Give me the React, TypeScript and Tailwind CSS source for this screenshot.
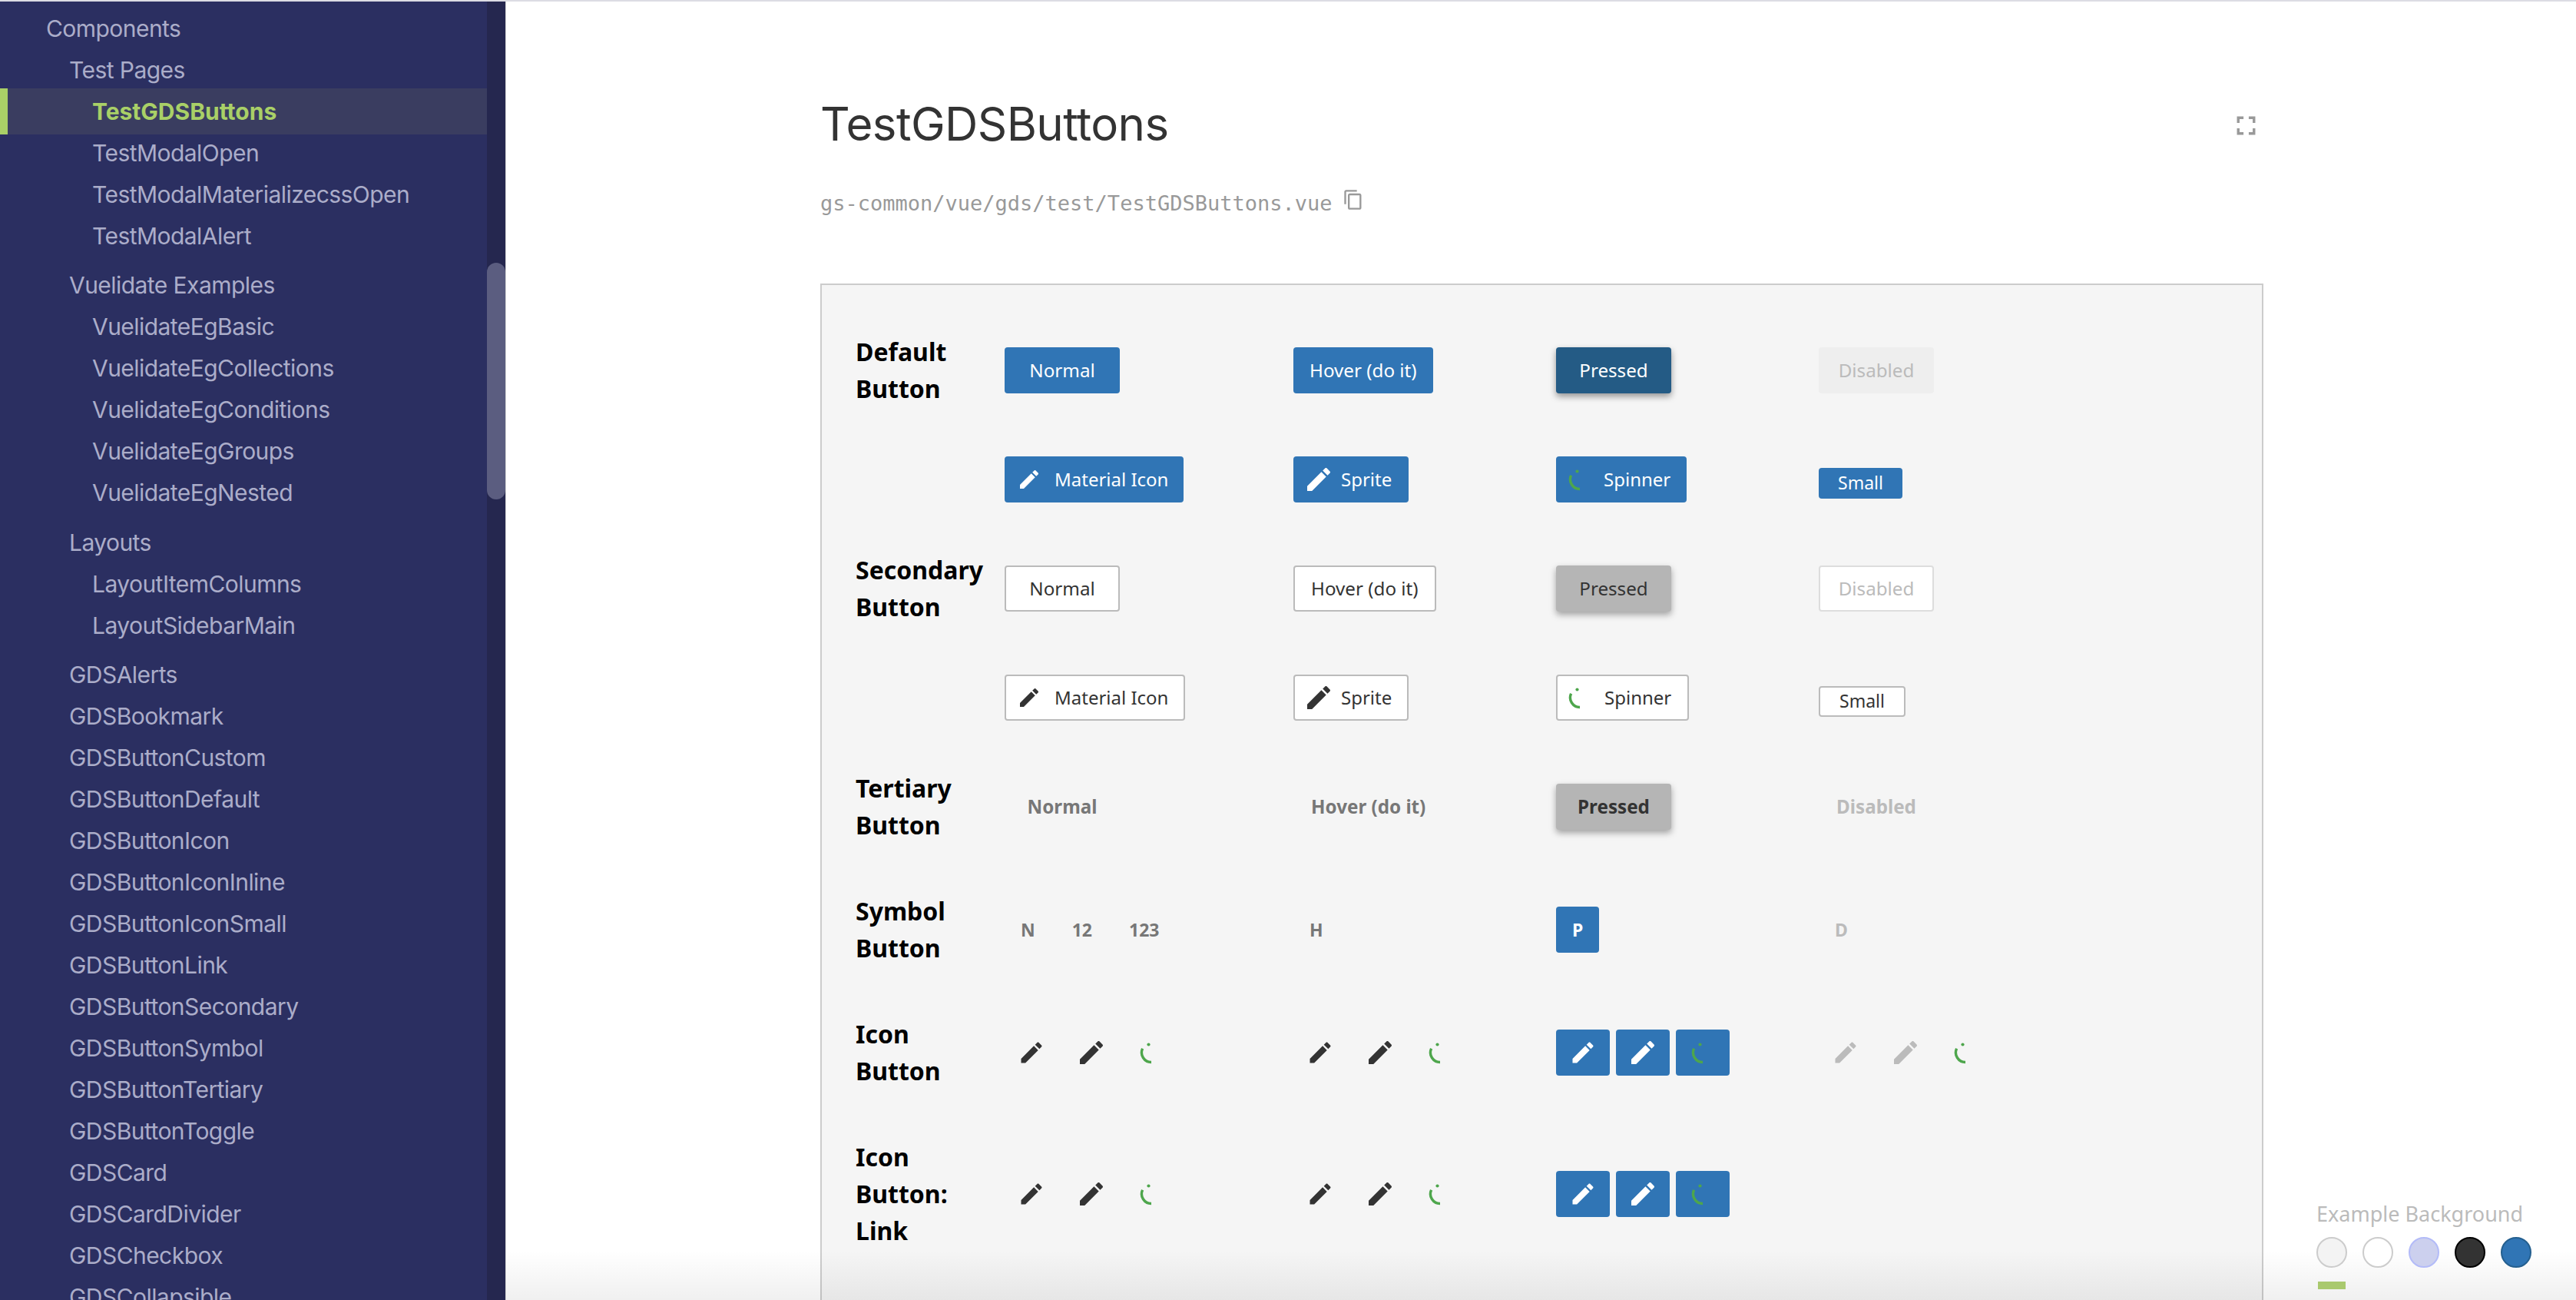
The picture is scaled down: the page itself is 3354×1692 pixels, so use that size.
import React from "react";

const PENCIL =
  "M3 17.25V21h3.75L17.81 9.94l-3.75-3.75L3 17.25zM20.71 7.04c.39-.39.39-1.02 0-1.41l-2.34-2.34c-.39-.39-1.02-.39-1.41 0l-1.83 1.83 3.75 3.75 1.83-1.83z";

function Pencil({ className }: { className: string }) {
  return (
    <svg viewBox="0 0 24 24" fill="currentColor" className={`shrink-0 ${className}`}>
      <path d={PENCIL} />
    </svg>
  );
}

function Spinner({ className = "" }: { className?: string }) {
  return (
    <svg viewBox="0 0 32 32" fill="none" className={`h-8 w-8 shrink-0 text-[#4ea64c] ${className}`}>
      <path d="M16 28.5A12.5 12.5 0 0 1 4.6 10.8" stroke="currentColor" strokeWidth="3.4" />
      <circle cx="12.5" cy="5.5" r="2.1" fill="currentColor" />
    </svg>
  );
}

const sidebarGroups: { label: string; level: number; active?: boolean; gap?: string }[] = [
  { label: "Components", level: 0 },
  { label: "Test Pages", level: 1 },
  { label: "TestGDSButtons", level: 2, active: true },
  { label: "TestModalOpen", level: 2 },
  { label: "TestModalMaterializecssOpen", level: 2 },
  { label: "TestModalAlert", level: 2 },
  { label: "Vuelidate Examples", level: 1, gap: "mt-[10px]" },
  { label: "VuelidateEgBasic", level: 2 },
  { label: "VuelidateEgCollections", level: 2 },
  { label: "VuelidateEgConditions", level: 2 },
  { label: "VuelidateEgGroups", level: 2 },
  { label: "VuelidateEgNested", level: 2 },
  { label: "Layouts", level: 1, gap: "mt-[11px]" },
  { label: "LayoutItemColumns", level: 2 },
  { label: "LayoutSidebarMain", level: 2 },
  { label: "GDSAlerts", level: 1, gap: "mt-[10px]" },
  { label: "GDSBookmark", level: 1 },
  { label: "GDSButtonCustom", level: 1 },
  { label: "GDSButtonDefault", level: 1 },
  { label: "GDSButtonIcon", level: 1 },
  { label: "GDSButtonIconInline", level: 1 },
  { label: "GDSButtonIconSmall", level: 1 },
  { label: "GDSButtonLink", level: 1 },
  { label: "GDSButtonSecondary", level: 1 },
  { label: "GDSButtonSymbol", level: 1 },
  { label: "GDSButtonTertiary", level: 1 },
  { label: "GDSButtonToggle", level: 1 },
  { label: "GDSCard", level: 1 },
  { label: "GDSCardDivider", level: 1 },
  { label: "GDSCheckbox", level: 1 },
  { label: "GDSCollapsible", level: 1 },
];

function Sidebar() {
  return (
    <aside className="relative h-full w-[659px] shrink-0 overflow-hidden border-r border-[#d5d5d5] bg-[#2b2f61] pt-2 font-['Inter',sans-serif] text-[30px] tracking-[-0.55px] text-[#abadc9]">
      <div className="w-[634px]">
        {sidebarGroups.map((item) => {
          const pad = item.level === 0 ? "pl-[60px]" : item.level === 1 ? "pl-[90px]" : "pl-[120px]";
          if (item.active) {
            return (
              <div
                key={item.label}
                className="-my-[3px] flex h-[60px] items-center border-l-[10px] border-[#a9d067] bg-[#3a3d60] pl-[110px] font-bold tracking-normal text-[#a9d067]"
              >
                {item.label}
              </div>
            );
          }
          return (
            <div key={item.label} className={`flex h-[54px] items-center ${pad} ${item.gap ?? ""}`}>
              {item.label}
            </div>
          );
        })}
      </div>
      {/* scrollbar */}
      <div className="absolute inset-y-0 right-0 w-6 bg-[#25274f]">
        <div className="mt-[340px] h-[308px] rounded-full bg-[#5b5d80]" />
      </div>
    </aside>
  );
}

type Kind = "default" | "pressed" | "disabled" | "sec" | "secPressed" | "secDisabled" | "ter" | "terPressed" | "terDisabled";

const kinds: Record<Kind, string> = {
  default: "bg-[#3075b5] text-white px-[21px]",
  pressed: "bg-[#245b85] text-white px-[21px] shadow-[0_4px_8px_rgba(0,0,0,0.4)]",
  disabled: "bg-[#eeeeee] text-[#bbbbbb] px-[21px]",
  sec: "bg-white text-[#333333] border-2 border-[#bbbbbb] px-[21px]",
  secPressed: "bg-[#b5b5b5] text-[#333333] px-[21px] shadow-[0_4px_8px_rgba(0,0,0,0.35)]",
  secDisabled: "bg-white text-[#bbbbbb] border-2 border-[#dddddd] px-[21px]",
  ter: "text-[#777777] font-bold px-[23px]",
  terPressed: "bg-[#b5b5b5] text-[#333333] font-bold px-[21px] shadow-[0_4px_8px_rgba(0,0,0,0.35)]",
  terDisabled: "text-[#bbbbbb] font-bold px-[23px]",
};

function Btn({ kind, children }: { kind: Kind; children: React.ReactNode }) {
  return (
    <button className={`flex h-[60px] min-w-[150px] items-center justify-center rounded text-[24.2px] ${kinds[kind]}`}>
      {children}
    </button>
  );
}

function IconTextBtn({ light, icon, children, inset }: { light?: boolean; icon: React.ReactNode; children: React.ReactNode; inset: string }) {
  return (
    <button
      className={`flex h-[60px] items-center rounded text-[24px] ${inset} ${
        light ? "border-2 border-[#bbbbbb] bg-white text-[#333333]" : "bg-[#3075b5] text-white"
      }`}
    >
      {icon}
      {children}
    </button>
  );
}

function SmallBtn({ light }: { light?: boolean }) {
  return (
    <button
      className={`mt-[9px] flex h-[40px] items-center rounded px-[25px] text-[23px] ${
        light ? "border-2 border-[#bbbbbb] bg-white text-[#333333]" : "bg-[#3075b5] text-white"
      }`}
    >
      Small
    </button>
  );
}

function Symbols({ items, className }: { items: string[]; className: string }) {
  return (
    <div className="flex gap-[6px]">
      {items.map((s) => (
        <button key={s} className={`flex h-[60px] items-center rounded px-[21px] text-[23px] font-bold ${className}`}>
          {s}
        </button>
      ))}
    </div>
  );
}

function IconSet({ box, pencil }: { box: string; pencil: string }) {
  return (
    <div className="flex gap-2">
      <span className={`flex h-[60px] w-[70px] items-center justify-center rounded ${box} ${pencil}`}>
        <Pencil className="h-9 w-9" />
      </span>
      <span className={`flex h-[60px] w-[70px] items-center justify-center rounded ${box} ${pencil}`}>
        <Pencil className="h-10 w-10" />
      </span>
      <span className={`flex h-[60px] w-[70px] items-center justify-center rounded ${box}`}>
        <Spinner />
      </span>
    </div>
  );
}

function Row({ label, cells }: { label?: string[]; cells: React.ReactNode[] }) {
  return (
    <div className="grid grid-cols-[194px_376px_342px_342px_auto] items-center">
      <div className="text-[32px] font-bold leading-[48px] text-black">
        {label?.map((l) => <div key={l}>{l}</div>)}
      </div>
      {cells.map((c, i) => (
        <div key={i} className="flex items-center">
          {c}
        </div>
      ))}
    </div>
  );
}

const swatches = [
  "bg-[#f3f3f3] border-[#cccccc]",
  "bg-white border-[#cccccc]",
  "bg-[#ccd0ee] border-[#b3bbf8]",
  "bg-[#333333] border-black",
  "bg-[#3075b5] border-[#245f8f]",
];

export default function App() {
  const whitePencil = <Pencil className="mr-[17px] h-8 w-8" />;
  const spritePencil = <Pencil className="mr-[9px] h-10 w-10" />;
  return (
    <div className="relative flex h-[1692px] w-[3354px] flex-col overflow-hidden bg-white font-['Noto_Sans',sans-serif]">
      <div className="h-0.5 w-full shrink-0 bg-[#dcdce4]" />
      <div className="flex min-h-0 flex-1">
        <Sidebar />
        <main className="flex min-w-0 flex-1 flex-col pl-[409px] pt-[123px]">
          <div className="flex w-[1879px] items-center justify-between">
            <h1 className="font-['Inter',sans-serif] text-[60px] leading-[72px] tracking-[-0.6px] text-[#333333]">TestGDSButtons</h1>
            <svg viewBox="0 0 24 24" fill="#999999" className="mr-[2px] mt-[5px] h-[41px] w-[41px]">
              <path d="M7 14H5v5h5v-2H7v-3zm-2-4h2V7h3V5H5v5zm12 7h-3v2h5v-5h-2v3zM14 5v2h3v3h2V5h-5z" />
            </svg>
          </div>
          <div className="mt-[48px] flex h-10 items-center gap-[14px] font-['DejaVu_Sans_Mono',monospace] text-[27px] text-[#999999]">
            gs-common/vue/gds/test/TestGDSButtons.vue
            <svg viewBox="0 0 24 24" fill="#999999" className="-mt-[10px] h-7 w-7">
              <path d="M16 1H4c-1.1 0-2 .9-2 2v14h2V3h12V1zm3 4H8c-1.1 0-2 .9-2 2v14c0 1.1.9 2 2 2h11c1.1 0 2-.9 2-2V7c0-1.1-.9-2-2-2zm0 16H8V7h11v14z" />
            </svg>
          </div>
          <section className="mt-[84px] w-[1879px] flex-1 border-2 border-b-0 border-[#cccccc] bg-[#f5f5f5] pl-[44px] pt-[63px]">
            <div className="flex flex-col gap-16">
              <Row
                label={["Default", "Button"]}
                cells={[
                  <Btn kind="default">Normal</Btn>,
                  <Btn kind="default">Hover (do it)</Btn>,
                  <Btn kind="pressed">Pressed</Btn>,
                  <Btn kind="disabled">Disabled</Btn>,
                ]}
              />
              <Row
                cells={[
                  <IconTextBtn icon={whitePencil} inset="pl-4 pr-5">Material Icon</IconTextBtn>,
                  <IconTextBtn icon={spritePencil} inset="pl-[13px] pr-[22px]">Sprite</IconTextBtn>,
                  <IconTextBtn icon={<Spinner className="mr-[15px]" />} inset="pl-[15px] pr-[21px]">Spinner</IconTextBtn>,
                  <SmallBtn />,
                ]}
              />
              <Row
                label={["Secondary", "Button"]}
                cells={[
                  <Btn kind="sec">Normal</Btn>,
                  <Btn kind="sec">Hover (do it)</Btn>,
                  <Btn kind="secPressed">Pressed</Btn>,
                  <Btn kind="secDisabled">Disabled</Btn>,
                ]}
              />
              <Row
                cells={[
                  <IconTextBtn light icon={whitePencil} inset="pl-[14px] pr-5">Material Icon</IconTextBtn>,
                  <IconTextBtn light icon={spritePencil} inset="pl-[11px] pr-5">Sprite</IconTextBtn>,
                  <IconTextBtn light icon={<Spinner className="mr-[16px]" />} inset="pl-[13px] pr-[21px]">Spinner</IconTextBtn>,
                  <SmallBtn light />,
                ]}
              />
              <Row
                label={["Tertiary", "Button"]}
                cells={[
                  <Btn kind="ter">Normal</Btn>,
                  <Btn kind="ter">Hover (do it)</Btn>,
                  <Btn kind="terPressed">Pressed</Btn>,
                  <Btn kind="terDisabled">Disabled</Btn>,
                ]}
              />
              <Row
                label={["Symbol", "Button"]}
                cells={[
                  <Symbols items={["N", "12", "123"]} className="text-[#777777]" />,
                  <Symbols items={["H"]} className="text-[#777777]" />,
                  <Symbols items={["P"]} className="bg-[#3075b5] text-white" />,
                  <Symbols items={["D"]} className="text-[#bbbbbb]" />,
                ]}
              />
              <Row
                label={["Icon", "Button"]}
                cells={[
                  <IconSet box="" pencil="text-[#333333]" />,
                  <IconSet box="" pencil="text-[#333333]" />,
                  <IconSet box="bg-[#3075b5]" pencil="text-white" />,
                  <IconSet box="" pencil="text-[#bbbbbb]" />,
                ]}
              />
              <Row
                label={["Icon", "Button:", "Link"]}
                cells={[
                  <IconSet box="" pencil="text-[#333333]" />,
                  <IconSet box="" pencil="text-[#333333]" />,
                  <IconSet box="bg-[#3075b5]" pencil="text-white" />,
                  <div />,
                ]}
              />
            </div>
          </section>
        </main>
      </div>
      {/* bottom fade over the content */}
      <div className="pointer-events-none absolute bottom-0 left-[659px] right-0 h-[64px] bg-gradient-to-b from-transparent to-black/[0.06]" />
      {/* background switcher */}
      <div className="absolute bottom-[14px] left-[3016px] w-[300px]">
        <div className="text-[27px] leading-[38px] text-[#bbbbbb]">Example Background</div>
        <div className="mt-[11px] flex gap-5">
          {swatches.map((s) => (
            <span key={s} className={`h-10 w-10 rounded-full border-2 ${s}`} />
          ))}
        </div>
        <div className="ml-[2px] mt-[18px] h-[10px] w-9 bg-[#a9c96e]" />
      </div>
    </div>
  );
}
